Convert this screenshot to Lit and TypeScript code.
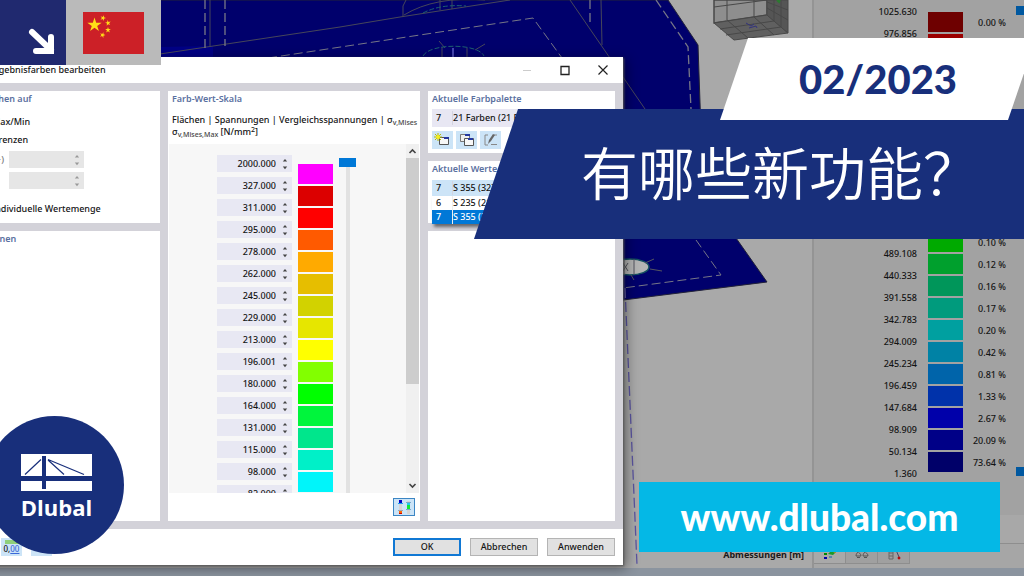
import { LitElement, html, css } from "lit";
import { customElement } from "lit/decorators.js";
import { styleMap } from "lit/directives/style-map.js";

const SCALE: [string, string][] = [
  ["2000.000", "#ff00ff"],
  ["327.000", "#dc0000"],
  ["311.000", "#ff0000"],
  ["295.000", "#ff5a00"],
  ["278.000", "#ffaa00"],
  ["262.000", "#e6be00"],
  ["245.000", "#d2d200"],
  ["229.000", "#e6e600"],
  ["213.000", "#ffff00"],
  ["196.001", "#82ff00"],
  ["180.000", "#00ff00"],
  ["164.000", "#00f53c"],
  ["131.000", "#00e68c"],
  ["115.000", "#00f0c8"],
  ["98.000", "#00f5fa"],
  ["82.000", "#64d7ff"],
];

/* value above the swatch, swatch colour, share of the surface */
const LEGEND: [string, string, string][] = [
  ["1025.630", "#6e0000", "0.00 %"],
  ["976.856", "#9b0000", ""],
  ["", "#aa0000", ""],
  ["", "#aa3c00", ""],
  ["", "#aa7000", ""],
  ["", "#9a7f00", ""],
  ["", "#8c8c00", ""],
  ["", "#9a9a00", ""],
  ["", "#aaaa00", ""],
  ["", "#57aa00", ""],
  ["", "#00aa00", "0.10 %"],
  ["489.108", "#00a02d", "0.12 %"],
  ["440.333", "#00965a", "0.16 %"],
  ["391.558", "#009b7d", "0.17 %"],
  ["342.783", "#00a0a0", "0.20 %"],
  ["294.009", "#0082a5", "0.42 %"],
  ["245.234", "#0064aa", "0.81 %"],
  ["196.459", "#0032aa", "1.33 %"],
  ["147.684", "#0000aa", "2.67 %"],
  ["98.909", "#000087", "20.09 %"],
  ["50.134", "#000069", "73.64 %"],
];

const spinner = html`<svg class="spin" viewBox="0 0 6 12" aria-hidden="true">
  <path d="M0.8 3.6 3 1 5.2 3.6zM0.8 8.6 3 11.2 5.2 8.6z" fill="currentColor" />
</svg>`;

@customElement("model-view")
class ModelView extends LitElement {
  static styles = css`
    :host { display: block; overflow: hidden; background: #a9a9a9; }
    svg { display: block; width: 100%; height: 100%; }
  `;
  render() {
    return html`<svg viewBox="0 0 812 568" preserveAspectRatio="xMinYMin slice" aria-hidden="true">
      <path d="M0 0H668L698 45 702 160 736 238 767 282 623 300H0z" fill="#00006c" stroke="#222238" />
      <path d="M160 47 213 46V57H160z" fill="#000085" />
      <g fill="none" stroke="#46465a">
        <path d="M160 54 340 27 400 17 510 0M210 0V47M570 0 645 109M601 0 602 45M403 17V6L406 0M440 0V10M452 0V9" />
        <path d="M404 15Q435-4 485 0M439 41l6 7M485 44l-10 6M442 47v12M467 48v10" />
      </g>
      <g fill="none" stroke="#777787" stroke-dasharray="9 4">
        <path d="M205 0V48M225 0V46M590 0V24M656 0 688 47 691 109" stroke-width="1.3" />
        <path d="M268 58 400 38 533 18 562 58M696 240 721 275 623 288" />
      </g>
      <g fill="none" stroke="#1e6070" stroke-dasharray="5 2">
        <path d="M423 56C430 43 478 43 484 56M423 13Q440 4 466 6" />
      </g>
      <path d="M453 48v10" stroke="#4444b0" stroke-width="2" />
      <ellipse cx="630" cy="267" rx="19" ry="8" fill="#b4b4b4" stroke="#145060" stroke-width="1.5" />
      <path d="M624 260v15M634 259v16M623 263l5 8M628 263l-5 8M645 263l9-4M650 269l12 2M631 275l3 5" stroke="#555560" fill="none" />
      <path d="M625 288 637 565" stroke="#5a54a0" stroke-width="1.3" stroke-dasharray="10 4" />
      <g stroke="#484848">
        <path d="M714 0H767V15L714 23z" fill="#8e8e8e" stroke-width="1.5" />
        <path d="M714 23 767 15 788 33 734 40z" fill="#606060" />
        <path d="M767 0H788V33L767 15z" fill="#555" />
        <path d="M727 0V20L748 38M754 0V17L774 35M714 7 767 0M720 29 774 21M726 35 781 27M767 2 788 10M774 0V21M781 0V27M767 8 788 20" fill="none" />
      </g>
      <path d="M746 23l5 3 3-2M749 28l7-2 1 2" stroke="#33337c" fill="none" />
      <path d="M777 0l2 2 1-3" stroke="#2c7a30" fill="none" stroke-width="2" />
    </svg>`;
  }
}

@customElement("legend-panel")
class LegendPanel extends LitElement {
  static styles = css`
    :host { display: flex; flex-direction: column; background: #a2a2a2; border-left: 2px solid #949494;
      box-sizing: border-box; color: #141414; font: 500 9px/22px "Noto Sans", "Open Sans", sans-serif; }
    .main { display: grid; grid-template-columns: 114px 35px 43px 1fr; align-content: start; flex: 1; min-height: 0; }
    .values, .shares, .bars { display: flex; flex-direction: column; }
    .values, .shares { text-align: right; }
    .values { padding: 1px 11px 0 0; }
    .cell { height: 22px; white-space: nowrap; }
    .bars, .shares { padding-top: 12px; }
    .bar { height: 20px; margin-bottom: 2px; }
    .range { display: flex; flex-direction: column; justify-content: space-between; align-items: flex-end; height: 476px; padding-top: 6px; box-sizing: border-box; }
    .handle { width: 8px; height: 9px; background: #0058a0; }
    .strip { height: 28px; background: #a8a8a8; border-bottom: 1px solid #8e8e8e; }
    .tabs { display: flex; height: 24px; background: #a6a6a6; }
    button { width: 32px; height: 20px; padding: 0; border: 1px solid #8e8e8e; border-top: 0; border-left: 0; background: #a0a0a0; display: grid; place-items: center; }
    button.on { background: #a9a9a9; }
    svg { width: 14px; height: 12px; }
  `;
  render() {
    return html`
      <div class="main">
        <div class="values">
          ${LEGEND.map((r) => html`<span class="cell">${r[0]}</span>`)}
          <span class="cell">1.360</span>
        </div>
        <div class="bars">
          ${LEGEND.map((r) => html`<span class="bar" style=${styleMap({ background: r[1] })}></span>`)}
        </div>
        <div class="shares">${LEGEND.map((r) => html`<span class="cell">${r[2]}</span>`)}</div>
        <div class="range"><span class="handle"></span><span class="handle"></span></div>
      </div>
      <div class="strip"></div>
      <div class="tabs">
        <button class="on" aria-label="Farbskala">
          <svg viewBox="0 0 14 12"><path d="M1 1h3v2H1z" fill="#a00" /><path d="M1 5h3v2H1z" fill="#080" /><path d="M1 9h3v2H1z" fill="#00a" /><path d="M5 6 8 3h6L10 7z" fill="#1b9a28" /><path d="M8 3h6l-2 2z" fill="#c98a12" /><path d="M6 9h3" stroke="#06a" /></svg>
        </button>
        <button aria-label="Faktoren">
          <svg viewBox="0 0 14 12" fill="none" stroke="#555"><path d="M1 8C1 5 3 5 3 3 3 5 6 5 6 8zM8 8C8 5 10 5 10 3 10 5 13 5 13 8zM2 9.500h3M9 9.500h3" /></svg>
        </button>
        <button aria-label="Filter">
          <svg viewBox="0 0 14 12" fill="none" stroke="#666"><path d="M2 2h4v9H2zM2 5h4M2 8h4M8 2h4" /><path d="M9 2 12 9" stroke="#446" /><circle cx="12" cy="10" r="1" fill="#b00" stroke="#b00" /></svg>
        </button>
      </div>
    `;
  }
}

@customElement("color-dialog")
class ColorDialog extends LitElement {
  static styles = css`
    :host { display: flex; flex-direction: column; background: #fff; color: #141414;
      font: 500 9px/12px "Noto Sans", "Open Sans", sans-serif; box-shadow: 1px 1px 2px #555, 3px 3px 12px rgba(0,0,0,.45); }
    * { box-sizing: border-box; }
    button, input, select { font: inherit; color: inherit; margin: 0; }
    h1, h2, p { margin: 0; font-size: 9px; white-space: nowrap; }
    h1 { font-weight: 500; }
    h2 { font-weight: 600; color: #5a70a0; line-height: 14px; }
    header { display: flex; align-items: center; height: 26px; padding: 0 1px 0 32px; }
    header h1 { flex: 1; line-height: 14px; }
    .win { width: 38px; height: 26px; padding: 0; border: 0; background: none; display: grid; place-items: center; }
    .win svg { width: 12px; height: 12px; }
    .body { flex: 1; min-height: 0; display: grid; grid-template-columns: 194px minmax(0, 1fr) 187px; gap: 8px; padding: 8px; background: #d3d2d9; }
    .col { display: flex; flex-direction: column; gap: 8px; min-height: 0; min-width: 0; }
    .box { background: #fff; padding: 1px 4px; overflow: hidden; }
    .wide { padding-left: 9px; }
    .first { height: 132px; }
    .grow { flex: 1; min-height: 0; }
    .opts { display: flex; flex-direction: column; padding-top: 10px; gap: 6px; }
    .opt { display: flex; align-items: center; gap: 5px; height: 12px; white-space: nowrap; }
    .opt input { width: 12px; height: 12px; }
    .limit { display: flex; justify-content: flex-end; align-items: center; gap: 5px; height: 15px; padding-right: 72px; color: #777; }
    .limit .field { background: #e6e6e6; color: #888; }
    .last { margin-top: 9px; }
    .field { display: flex; flex: none; align-items: center; width: 75px; height: 17px; padding-right: 4px; background: #e8e8f3; }
    .field input { flex: 1; min-width: 0; width: 0; padding: 0; border: 0; background: none; text-align: right; height: 15px; }
    .spin { width: 6px; height: 12px; margin-left: 6px; color: #444; flex: none; }
    .limit .spin { color: #999; }
    .mid { display: flex; flex-direction: column; padding: 1px; }
    .mid h2, .mid p { padding: 0 3px; }
    .mid p { margin: 8px 0 6px; }
    sub, sup { font-size: 7px; line-height: 0; }
    sub { color: #444; vertical-align: -2px; }
    sup { vertical-align: 3px; }
    .scroll { flex: 1; min-height: 0; display: flex; overflow: hidden; background: #f7f7f7; }
    .cols { flex: 1; display: flex; gap: 6px; padding: 11px 0 0 48px; min-width: 0; }
    .vals { display: flex; flex-direction: column; gap: 5px; }
    .swatches { display: flex; flex-direction: column; gap: 2px; padding-top: 9px; }
    .sw { width: 35px; height: 20px; flex: none; }
    .slider { display: flex; flex-direction: column; align-items: center; width: 17px; padding-top: 3px; }
    .knob { width: 17px; height: 9px; background: #0078d7; flex: none; }
    .track { width: 4px; flex: 1; background: #e2e2e2; }
    .bar { width: 13px; display: flex; flex-direction: column; align-items: center; background: #f0f0f0; }
    .bar svg { width: 13px; height: 14px; flex: none; }
    .thumb { width: 13px; flex: 0 0 226px; background: #cdcdcd; }
    .space { flex: 1; }
    .tools { display: flex; justify-content: flex-end; padding: 5px 4px; height: 27px; }
    .icon { width: 21px; height: 18px; padding: 0; border: 0; background: #cce4f7; display: grid; place-items: center; }
    .icon svg { width: 17px; height: 16px; }
    .tools .icon { border: 1px solid #3c86c4; width: 22px; }
    .palette { height: 62px; }
    .sets { height: 62px; overflow: visible; }
    .row { display: grid; grid-template-columns: 16px 1fr; align-items: center; height: 18px; background: #e8e7f3; padding-left: 4px; margin-top: 3px; }
    .row.blue { height: 16px; margin-top: 4px; background: #cce4f7; }
    .row select { appearance: none; border: 0; border-left: 1px solid #d4d4e0; background: none; padding: 0; height: 14px; line-height: 14px; }
    .icons { display: flex; gap: 3px; padding-top: 4px; }
    .list { position: relative; list-style: none; margin: 0; padding: 0; background: #fff; box-shadow: 2px 3px 3px rgba(0,0,0,.5); }
    .list li { display: grid; grid-template-columns: 16px 1fr; height: 14px; line-height: 14px; padding-left: 4px; }
    .list span + span { border-left: 1px solid #eee; }
    .list .sel { background: #0078d7; color: #fff; }
    footer { display: flex; align-items: center; gap: 9px; height: 36px; padding: 0 8px; }
    .unit { width: 21px; height: 18px; padding: 4px 0 0; border: 0; background: linear-gradient(#8fd07a, #8fd07a) 50% 2px / 14px 4px no-repeat #cce4f7; font-size: 8px; line-height: 12px; margin-left: 35px; }
    .unit span { color: #3a68d8; text-decoration: underline; }
    .cmd { width: 68px; height: 18px; padding: 0; border: 1px solid #b4b4b4; background: #e1e1e1; }
    .cmd.main { border: 2px solid #1078d4; margin-left: auto; }
  `;
  render() {
    return html`
      <header>
        <h1>Ergebnisfarben bearbeiten</h1>
        <button class="win" aria-label="Minimieren"><svg viewBox="0 0 12 12"><path d="M2 6.500h8" stroke="#ccc" /></svg></button>
        <button class="win" aria-label="Maximieren"><svg viewBox="0 0 12 12"><path d="M2 2.500h8v8H2z" fill="none" stroke="#222" stroke-width="1.300" /></svg></button>
        <button class="win" aria-label="Schließen"><svg viewBox="0 0 12 12"><path d="M1.500 1.500l9 9m0-9-9 9" stroke="#222" stroke-width="1.200" /></svg></button>
      </header>
      <div class="body">
        <div class="col">
          <section class="box wide first">
            <h2>Beziehen auf</h2>
            <div class="opts">
              <label class="opt"><input type="radio" name="ref" />Max/Min</label>
              <label class="opt"><input type="radio" name="ref" />Grenzen</label>
              <label class="limit">(+)<span class="field"><input disabled />${spinner}</span></label>
              <label class="limit"><span class="field"><input disabled aria-label="Untere Grenze" />${spinner}</span></label>
              <label class="opt last"><input type="radio" name="ref" checked />Individuelle Wertemenge</label>
            </div>
          </section>
          <section class="box wide grow"><h2>Optionen</h2></section>
        </div>
        <section class="box mid">
          <h2>Farb-Wert-Skala</h2>
          <p>Flächen | Spannungen | Vergleichsspannungen | σ<sub>v,Mises</sub><br />σ<sub>v,Mises,Max</sub> [N/mm<sup>2</sup>]</p>
          <div class="scroll">
            <div class="cols">
              <div class="vals">
                ${SCALE.map((s, i) => html`<span class="field"><input aria-label="Wert ${i + 1}" .value=${s[0]} />${spinner}</span>`)}
              </div>
              <div class="swatches">
                ${SCALE.map((s) => html`<span class="sw" style=${styleMap({ background: s[1] })}></span>`)}
              </div>
              <div class="slider"><span class="knob"></span><span class="track"></span></div>
            </div>
            <div class="bar">
              <svg viewBox="0 0 13 14"><path d="M3.500 9 6.500 6 9.500 9" fill="none" stroke="#444" stroke-width="1.600" /></svg>
              <span class="thumb"></span><span class="space"></span>
              <svg viewBox="0 0 13 14"><path d="M3.500 5 6.500 8 9.500 5" fill="none" stroke="#444" stroke-width="1.600" /></svg>
            </div>
          </div>
          <div class="tools">
            <button class="icon" aria-label="Farbskala anpassen"><svg viewBox="0 0 17 16">
              <path d="M3 1h3v14H3zM11 2h3v13h-3z" fill="#d4d4d4" />
              <path d="M3 1h3v3H3z" fill="#0000c8" /><path d="M2 4h5v1H2z" fill="#18a0f0" /><path d="M2 11h5v1H2z" fill="#9ab" /><path d="M3 12h3v2H3z" fill="#f60" /><path d="M3 14h3v1H3z" fill="#c00" />
              <path d="M11 4h3v2h-3z" fill="#22c8e8" /><path d="M11 6h3v4h-3z" fill="#12e838" /><path d="M10 3h5v1h-5zM10 10h5v1h-5z" fill="#7aa8c8" />
            </svg></button>
          </div>
        </section>
        <div class="col">
          <section class="box palette">
            <h2>Aktuelle Farbpalette</h2>
            <div class="row"><span>7</span><select aria-label="Aktuelle Farbpalette"><option>21 Farben (21 Farben)</option></select></div>
            <div class="icons">
              <button class="icon" aria-label="Neu"><svg viewBox="0 0 17 16"><path d="M5.500 5.500h9v7h-9z" fill="#f6f6f6" stroke="#555" /><path d="M10 5h5v2h-5z" fill="#2438a0" /><path d="M4 1v8M0 5h8M1 2l6 6M7 2 1 8" stroke="#b8b800" /><circle cx="4" cy="5" r="2" fill="#f4ee20" /></svg></button>
              <button class="icon" aria-label="Kopieren"><svg viewBox="0 0 17 16"><path d="M2.500 2.500h9v7h-9z" fill="#eee" stroke="#777" /><path d="M6.500 6.500h9v7h-9z" fill="#f8f8f8" stroke="#555" /><path d="M7 2h5v2H7zM10 6h5v2h-5z" fill="#2438a0" /></svg></button>
              <button class="icon" aria-label="Bearbeiten"><svg viewBox="0 0 17 16"><path d="M6 3H3v10h3M9 12.500h6M12 3h3" fill="none" stroke="#888" /><path d="M6 12 7 8 11 2 13 3 9 9z" fill="#666" /></svg></button>
            </div>
          </section>
          <section class="box sets">
            <h2>Aktuelle Werte</h2>
            <div class="row blue"><span>7</span><select aria-label="Aktuelle Werte"><option>S 355 (327)</option></select></div>
            <ul class="list">
              <li><span>6</span><span>S 235 (213)</span></li>
              <li class="sel"><span>7</span><span>S 355 (327)</span></li>
            </ul>
          </section>
          <section class="box grow"></section>
        </div>
      </div>
      <footer>
        <button class="unit">0,<span>00</span></button>
        <button class="icon" aria-label="Standard"></button>
        <button class="cmd main">OK</button>
        <button class="cmd">Abbrechen</button>
        <button class="cmd">Anwenden</button>
      </footer>
    `;
  }
}

@customElement("app-root")
class AppRoot extends LitElement {
  static styles = css`
    :host { display: block; position: relative; height: 100vh; overflow: hidden; background: #8b949f; font-family: "Noto Sans", sans-serif; }
    * { box-sizing: border-box; }
    .app { display: grid; grid-template-columns: minmax(0, 1fr) 212px; height: 100%; padding-bottom: 8px; }
    .view { display: grid; min-height: 0; position: relative; }
    .caption { position: absolute; right: 8px; bottom: 6px; font-size: 9px; line-height: 14px; font-weight: 700; color: #1a1a1a; }
    color-dialog { position: absolute; left: -42px; width: 665px; top: 57px; bottom: 11px; }
    .corner { position: absolute; left: 0; top: 0; display: flex; height: 65px; }
    .arrow { width: 66px; background: #20296f; }
    .flag { width: 95px; background: #bababa; display: grid; place-items: center; }
    .flag svg { width: 61px; height: 42px; }
    .arrow svg { width: 66px; height: 65px; }
    .headline { position: absolute; right: 0; top: 109px; width: 550px; height: 130px; background: #182f7b; clip-path: polygon(44px 0, 100% 0, 100% 100%, 0 100%);
      display: flex; align-items: center; padding: 0 0 8px 107px; }
    h1 { margin: 0; color: #fff; font: 350 57px/84px "Noto Sans CJK SC", sans-serif; white-space: nowrap; }
    .date { position: absolute; right: -12px; top: 38px; width: 316px; height: 82px; background: #fff; color: #182f7b; clip-path: polygon(28px 0, 100% 0, calc(100% - 28px) 100%, 0 100%);
      display: grid; place-items: center; font: 900 40px/50px Lato, sans-serif; }
    .url { position: absolute; right: 24px; bottom: 24px; width: 361px; height: 70px; background: #04b8e6; color: #fff; text-decoration: none;
      display: grid; place-items: center; font: 900 37px/40px Lato, sans-serif; }
    .logo { position: absolute; left: -15px; bottom: 22px; width: 139px; height: 138px; border-radius: 50%; background: #182f7b; color: #fff;
      display: flex; flex-direction: column; align-items: center; padding: 38px 0 0 4px; }
    .logo svg { width: 71px; height: 37px; }
    .name { font: 700 22px/32px "Open Sans", sans-serif; }
  `;
  render() {
    return html`
      <div class="app">
        <div class="view"><model-view></model-view><span class="caption">Abmessungen [m]</span></div>
        <legend-panel></legend-panel>
      </div>
      <color-dialog role="dialog" aria-label="Ergebnisfarben bearbeiten"></color-dialog>
      <div class="corner">
        <div class="arrow"><svg viewBox="0 0 66 65"><path d="M32 32 51 50M51 37V51H36" fill="none" stroke="#fff" stroke-width="6" stroke-linecap="round" /></svg></div>
        <div class="flag">
          <svg viewBox="0 0 61 42"><defs><path id="s" d="M0-1 .225-.309 .951-.309 .363 .118 .588 .809 0 .382-.588 .809-.363 .118-.951-.309-.225-.309z" /></defs>
            <path d="M0 0h61v42H0z" fill="#cc2027" />
            <g fill="#ffde17"><use href="#s" transform="translate(11.500 13) scale(7.500)" /><use href="#s" transform="translate(20 6) rotate(20) scale(3)" /><use href="#s" transform="translate(25 11) rotate(-10) scale(3)" /><use href="#s" transform="translate(25 18) scale(3)" /><use href="#s" transform="translate(19.500 23) rotate(20) scale(3)" /></g>
          </svg>
        </div>
      </div>
      <div class="headline"><h1>有哪些新功能？</h1></div>
      <div class="date">02/2023</div>
      <a class="url" href="https://www.dlubal.com">www.dlubal.com</a>
      <div class="logo">
        <svg viewBox="0 0 71 37"><path d="M0 0h71v22H0zM0 27h71v10H0z" fill="#fff" /><path d="M21 2h4v33h-4z" fill="#182f7b" /><path d="M20 5.500 4 20.500M27 6 43 20.500M27 5.500 63 20.500" stroke="#182f7b" stroke-width="1.200" /></svg>
        <span class="name">Dlubal</span>
      </div>
    `;
  }
}
